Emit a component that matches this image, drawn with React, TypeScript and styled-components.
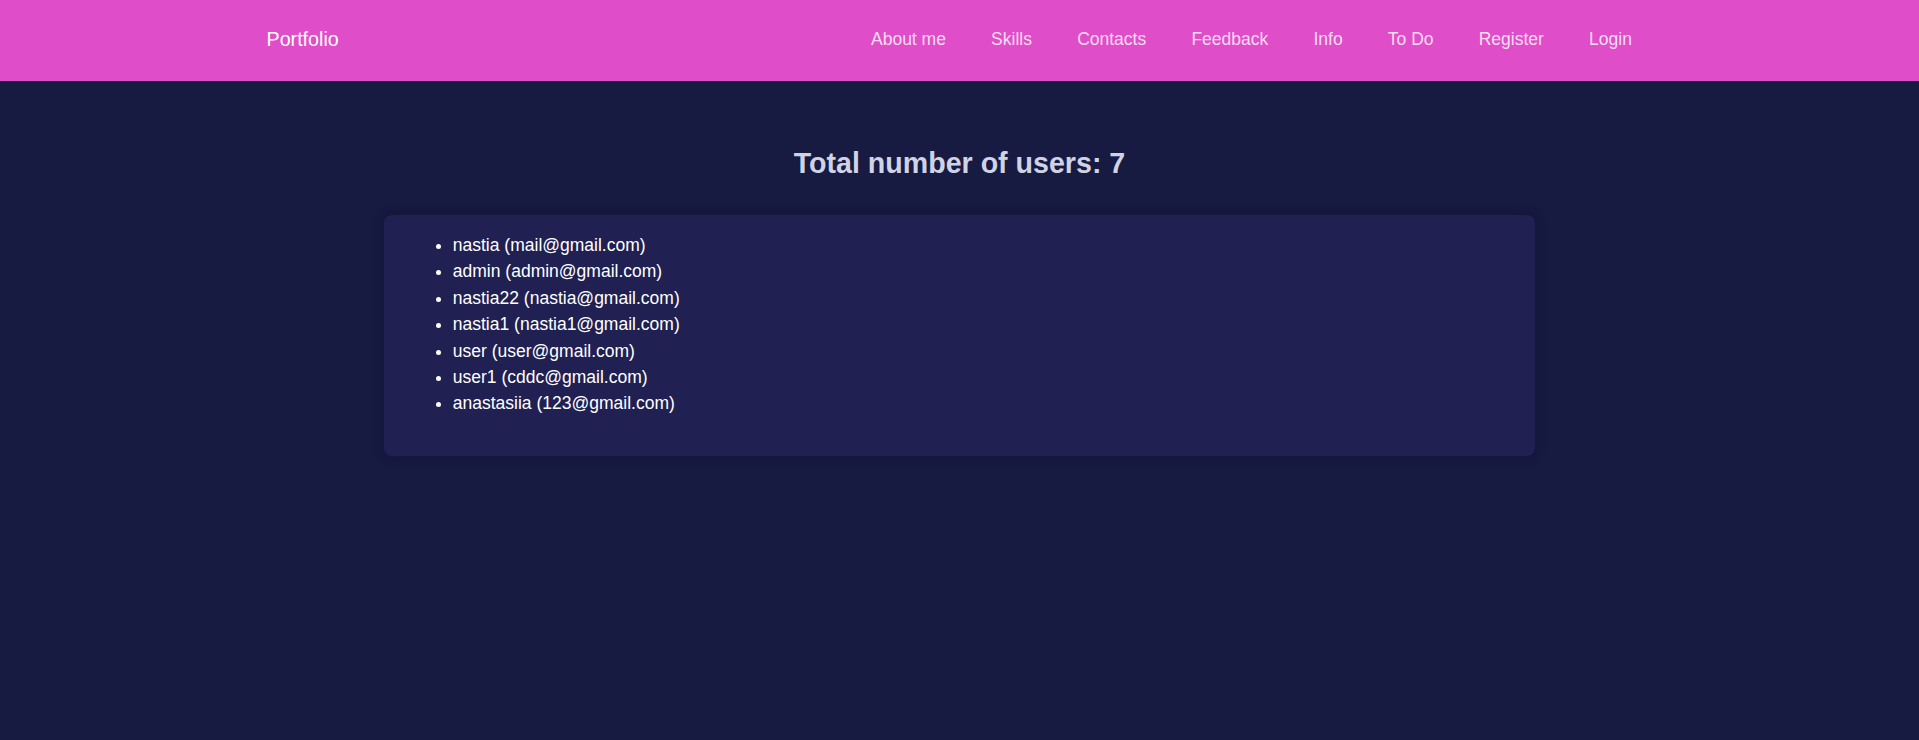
import React from "react";
import styled, { createGlobalStyle } from "styled-components";

const GlobalStyle = createGlobalStyle`
  html, body {
    margin: 0;
    padding: 0;
    background: #171a41;
    font-family: "Liberation Sans", Arial, sans-serif;
  }
  * { box-sizing: border-box; }
`;

const Page = styled.div`
  min-height: 740px;
  background: #171a41;
`;

const Header = styled.header`
  height: 81px;
  background: #e04dc8;
`;

const HeaderInner = styled.nav`
  width: 1390px;
  height: 100%;
  margin: 0 auto;
  padding-bottom: 2px;
  display: flex;
  align-items: center;
  justify-content: space-between;
`;

const Brand = styled.a`
  color: #ffffff;
  font-size: 19.7px;
  text-decoration: none;
  padding-left: 2px;
`;

const NavList = styled.ul`
  display: flex;
  list-style: none;
  margin: 0;
  padding: 0;
`;

const NavItem = styled.li`
  padding: 0 22.6px;
`;

const NavLink = styled.a`
  color: #fbdcf3;
  font-size: 17.5px;
  text-decoration: none;
`;

const Main = styled.main`
  display: flex;
  flex-direction: column;
  align-items: center;
  padding-top: 66px;
`;

const Title = styled.h2`
  margin: 0 0 35px;
  font-size: 28.6px;
  font-weight: 700;
  line-height: 33px;
  color: #cfd3e4;
`;

const Card = styled.section`
  width: 60%;
  background: #202052;
  border-radius: 8px;
  box-shadow: 0 0 12px rgba(10, 10, 35, 0.35);
  padding: 17px 29px 39px;
`;

const UserList = styled.ul`
  margin: 0;
  padding-left: 40px;
  color: #ffffff;
  font-size: 17.5px;
  line-height: 26.4px;
`;

const UserItem = styled.li``;

const links = ["About me", "Skills", "Contacts", "Feedback", "Info", "To Do", "Register", "Login"];

const users = [
  { name: "nastia", email: "mail@gmail.com" },
  { name: "admin", email: "admin@gmail.com" },
  { name: "nastia22", email: "nastia@gmail.com" },
  { name: "nastia1", email: "nastia1@gmail.com" },
  { name: "user", email: "user@gmail.com" },
  { name: "user1", email: "cddc@gmail.com" },
  { name: "anastasiia", email: "123@gmail.com" },
];

export default function App() {
  return (
    <Page>
      <GlobalStyle />
      <Header>
        <HeaderInner>
          <Brand href="#">Portfolio</Brand>
          <NavList>
            {links.map((l) => (
              <NavItem key={l}>
                <NavLink href="#">{l}</NavLink>
              </NavItem>
            ))}
          </NavList>
        </HeaderInner>
      </Header>
      <Main>
        <Title>Total number of users: {users.length}</Title>
        <Card>
          <UserList>
            {users.map((u) => (
              <UserItem key={u.name}>
                {u.name} ({u.email})
              </UserItem>
            ))}
          </UserList>
        </Card>
      </Main>
    </Page>
  );
}
